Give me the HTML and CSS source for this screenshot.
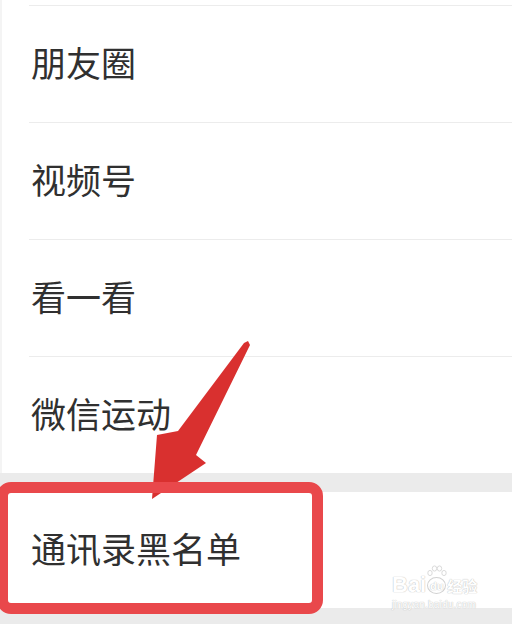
FILE: index.html
```html
<!DOCTYPE html>
<html lang="zh-CN">
<head>
    <meta charset="UTF-8">
    <meta name="viewport" content="width=device-width, initial-scale=1.0">
    <title>设置</title>
    <link rel="stylesheet" href="styles.css">
</head>
<body>
    <main class="screen">
        <ul class="group first">
            <li class="item">朋友圈</li>
            <li class="item">视频号</li>
            <li class="item">看一看</li>
            <li class="item">微信运动</li>
        </ul>
        <ul class="group">
            <li class="item">通讯录黑名单</li>
        </ul>

        <svg class="arrow" viewBox="0 0 512 624" width="512" height="624">
            <polygon points="244,343 248,341 250,345 196,455 206,463 152,499 157,435 178,431" fill="#d9302f"/>
        </svg>
        <div class="highlight"></div>

        <div class="watermark">
            <div class="logo">
                <span class="bai">Bai</span>
                <span class="paw">
                    <svg class="toes" viewBox="0 0 20 12" width="20" height="12">
                        <ellipse cx="3" cy="8" rx="2.2" ry="2.6"/>
                        <ellipse cx="7.5" cy="3.5" rx="2.2" ry="2.6"/>
                        <ellipse cx="12.5" cy="3.5" rx="2.2" ry="2.6"/>
                        <ellipse cx="17" cy="8" rx="2.2" ry="2.6"/>
                    </svg>
                    du
                </span>
                <span class="jy">经验</span>
            </div>
            <div class="url">jingyan.baidu.com</div>
        </div>
    </main>
</body>
</html>
```

FILE: styles.css
```css
*{
    box-sizing: border-box;
    margin: 0;
    padding: 0;
}
body{
    background-color: rgb(235, 235, 235);
    font-family: "Noto Sans CJK SC", "Noto Sans", sans-serif;
    color: rgb(48, 48, 48);
}
.screen{
    position: relative;
    width: 512px;
    height: 624px;
    overflow: hidden;
}
ul{
    list-style: none;
    background-color: white;
    border-left: 2px solid rgb(244, 244, 244);
}
.group.first{
    padding-top: 5px;
    margin-bottom: 19px;
}
.item{
    display: flex;
    align-items: center;
    height: 117px;
    margin-left: 27px;
    padding-left: 2px;
    padding-bottom: 6px;
    font-size: 35px;
    border-top: 1px solid rgb(236, 236, 236);
}
.group:not(.first) .item{
    height: 116px;
    border-top: none;
}
.arrow{
    position: absolute;
    top: 0;
    left: 0;
}
.highlight{
    position: absolute;
    top: 482px;
    left: -3px;
    width: 326px;
    height: 132px;
    border: 11px solid rgb(233, 72, 75);
    border-radius: 14px;
}
.watermark{
    position: absolute;
    left: 392px;
    top: 566px;
    color: white;
    font-family: "Liberation Sans", sans-serif;
    text-shadow: 0 0 1px rgb(190, 190, 190), 0 0 1px rgb(190, 190, 190);
    opacity: 0.9;
}
.logo{
    display: flex;
    align-items: flex-end;
    gap: 1px;
    height: 30px;
}
.bai{
    font-size: 22px;
    font-weight: bold;
    line-height: 22px;
}
.paw{
    position: relative;
    display: flex;
    align-items: center;
    justify-content: center;
    width: 19px;
    height: 17px;
    margin-bottom: 2px;
    border-radius: 50%;
    border: 1px solid rgb(205, 205, 205);
    font-size: 11px;
    font-weight: bold;
}
.toes{
    position: absolute;
    top: -13px;
    left: -1px;
    fill: white;
    stroke: rgb(205, 205, 205);
    stroke-width: 0.8;
}
.jy{
    font-family: "Noto Sans CJK SC", sans-serif;
    font-size: 15px;
    font-weight: bold;
    line-height: 20px;
}
.url{
    font-size: 10px;
    line-height: 14px;
    margin-top: 2px;
    letter-spacing: 0.2px;
}
```
